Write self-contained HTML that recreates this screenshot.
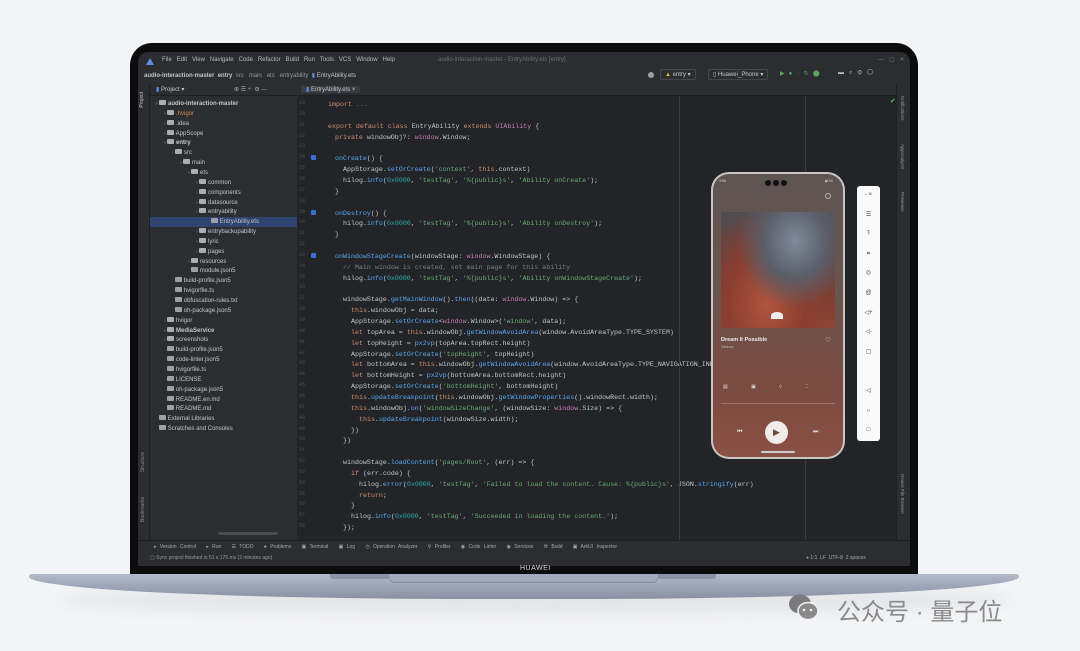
<!DOCTYPE html>
<html><head><meta charset="utf-8"><style>
*{margin:0;padding:0;box-sizing:border-box}
body{width:1080px;height:651px;background:#f3f4f6;position:relative;overflow:hidden;font-family:"Liberation Sans",sans-serif}
.a{position:absolute}
.bezel{left:130px;top:43px;width:788px;height:533px;background:#0c0c0d;border-radius:22px 22px 0 0}
.scr{left:138px;top:52px;width:772px;height:514px;background:#232427;overflow:hidden;border-radius:10px 10px 0 0}
.mono{font-family:"Liberation Mono",monospace;font-size:6.65px;white-space:pre;color:#c4c6cc}
.t{font-size:6px;color:#c4c6cc;white-space:nowrap}
.k{color:#cf8e6d}.f{color:#56a8f5}.s{color:#6aab73}.p{color:#c77dbb}.c{color:#7a7e85}.n{color:#2aacb8}
</style></head><body>
<div class="a" style="left:60px;top:585px;width:950px;height:30px;border-radius:50%;background:#e4e6ea;filter:blur(6px)"></div>
<div class="bezel a"></div>
<div class="scr a">
 <div class="a" style="left:0;top:0;width:772px;height:32px;background:#2b2d30"></div>
 <div class="a" style="left:8px;top:6px;width:8px;height:7px;background:#5b8ee6;clip-path:polygon(50% 0,100% 100%,0 100%)"></div>
 <div class="a t" style="left:24px;top:5px;color:#b8bac0">File&nbsp;&nbsp; Edit&nbsp;&nbsp; View&nbsp;&nbsp; Navigate&nbsp;&nbsp; Code&nbsp;&nbsp; Refactor&nbsp;&nbsp; Build&nbsp;&nbsp; Run&nbsp;&nbsp; Tools&nbsp;&nbsp; VCS&nbsp;&nbsp; Window&nbsp;&nbsp; Help</div>
 <div class="a t" style="left:300px;top:5px;color:#6c6e73">audio-interaction-master - EntryAbility.ets [entry]</div>
 <div class="a t" style="left:740px;top:4px;color:#777">—&nbsp;&nbsp;&nbsp;▢&nbsp;&nbsp;&nbsp;✕</div>
 <div class="a t" style="left:6px;top:20px;font-weight:bold">audio-interaction-master &nbsp;<b>entry</b> <span style="font-weight:normal;color:#999">&nbsp;src &nbsp; main &nbsp; ets &nbsp; entryability</span> <span style="font-weight:normal">&nbsp;<span style="color:#5b8ee6">▮</span> EntryAbility.ets</span></div>
 <div class="a" style="left:510px;top:20px;width:6px;height:6px;border-radius:50%;background:#9a9ca2"></div>
 <div class="a t" style="left:522px;top:17px;border:1px solid #44464b;padding:1px 4px;border-radius:2px"><span style="color:#e5b73b">▲</span> entry ▾</div>
 <div class="a t" style="left:570px;top:17px;border:1px solid #44464b;padding:1px 4px;border-radius:2px">▯ Huawei_Phone ▾</div>
 <div class="a t" style="left:642px;top:18px;color:#58a55c;letter-spacing:4px">▶●◌↻⬤</div>
 <div class="a t" style="left:700px;top:18px;color:#bbb;letter-spacing:5px">▬⌕⚙◯</div>
 <div class="a" style="left:12px;top:32px;width:147px;height:12px;background:#2b2d30;border-bottom:1px solid #1e1f22"></div>
 <div class="a t" style="left:18px;top:34px"><span style="color:#5b8ee6">▮</span> Project ▾ <span style="margin-left:48px;color:#aaa">⊕ ☰ ÷ &nbsp;⚙ —</span></div>
 <div class="a" style="left:159px;top:32px;width:613px;height:12px;background:#2b2d30;border-bottom:1px solid #1e1f22"></div>
 <div class="a t" style="left:163px;top:34px;background:#3a3c41;padding:0 5px"><span style="color:#5b8ee6">▮</span> EntryAbility.ets ×</div>
 <div class="a" style="left:0;top:32px;width:12px;height:470px;background:#2b2d30;border-right:1px solid #1e1f22"></div>
 <div class="a t" style="left:1px;top:40px;writing-mode:vertical-rl;transform:rotate(180deg);font-size:5px">Project</div>
 <div class="a t" style="left:2px;top:400px;writing-mode:vertical-rl;transform:rotate(180deg);font-size:5px;color:#888">Structure</div>
 <div class="a t" style="left:2px;top:445px;writing-mode:vertical-rl;transform:rotate(180deg);font-size:5px;color:#888">Bookmarks</div>
 <div class="a" style="left:12px;top:44px;width:147px;height:458px;background:#2b2d30"></div>
 <div class="a" style="left:12px;top:165px;width:147px;height:10px;background:#2e436e"></div>
 <div class="a" style="left:80px;top:480px;width:60px;height:3px;background:#4a4c50;border-radius:2px"></div>
 <div id="tree"></div>
 <div class="a" style="left:159px;top:44px;width:24px;height:458px;background:#232427"></div>
 <div id="code"></div>
 <div class="a" style="left:541px;top:44px;width:1px;height:458px;background:#393b40"></div>
 <div class="a" style="left:667px;top:44px;width:1px;height:458px;background:#393b40"></div>
 <div class="a" style="left:758px;top:32px;width:14px;height:470px;background:#2b2d30;border-left:1px solid #1e1f22"></div>
 <div class="a t" style="left:762px;top:44px;writing-mode:vertical-rl;font-size:4.5px;color:#999">Notifications</div>
 <div class="a t" style="left:762px;top:92px;writing-mode:vertical-rl;font-size:4.5px;color:#999">AppAnalyzer</div>
 <div class="a t" style="left:762px;top:140px;writing-mode:vertical-rl;font-size:4.5px;color:#999">Previewer</div>
 <div class="a t" style="left:762px;top:422px;writing-mode:vertical-rl;font-size:4.5px;color:#999">Device File Browser</div>
 <div class="a" style="left:752px;top:45px;color:#5fb85f;font-size:7px">✔</div>
 <div class="a" style="left:573px;top:120px;width:134px;height:287px;border-radius:18px;background:#c9c6c2;padding:2px">
  <div style="width:100%;height:100%;border-radius:16px;background:linear-gradient(180deg,#5d5552 0%,#6a5550 40%,#7a4a40 75%,#8a5046 100%);position:relative;overflow:hidden">
   <div class="a" style="left:52px;top:6px;width:26px;height:6px;display:flex;gap:2px"><i style="width:6px;height:6px;background:#111;border-radius:50%"></i><i style="width:6px;height:6px;background:#111;border-radius:50%"></i><i style="width:6px;height:6px;background:#111;border-radius:50%"></i></div>
   <div class="a" style="left:6px;top:5px;font-size:3.5px;color:#ddd">3:06</div>
   <div class="a" style="left:112px;top:5px;font-size:3.5px;color:#ddd">▮100</div>
   <div class="a" style="left:112px;top:19px;width:6px;height:6px;border:1px solid #bbb;border-radius:50%"></div>
   <div class="a" style="left:8px;top:38px;width:114px;height:116px;background:radial-gradient(ellipse at 65% 25%,#7d8a9a 0%,#5b5e68 30%,transparent 55%),radial-gradient(ellipse at 40% 80%,#b0553e 0%,#8a3e30 40%,transparent 75%),linear-gradient(180deg,#4f4c52,#7a3e33 70%,#8e4637)"></div>
   <div class="a" style="left:58px;top:138px;width:12px;height:7px;background:#eee;border-radius:50% 50% 0 0"></div>
   <div class="a" style="left:8px;top:163px;font-size:5.5px;color:#eee;font-weight:bold">Dream It Possible</div>
   <div class="a" style="left:8px;top:171px;font-size:3.5px;color:#bbb">Delacey</div>
   <div class="a" style="left:112px;top:162px;font-size:7px;color:#ddd">♡</div>
   <div class="a" style="left:10px;top:210px;font-size:5px;color:#ddd;word-spacing:22px">▤ ▣ ◊ ⁚⁚</div>
   <div class="a" style="left:8px;top:229px;width:114px;height:1px;background:#a07468"></div>
   <div class="a" style="left:24px;top:255px;font-size:6px;color:#eee">⏮</div>
   <div class="a" style="left:52px;top:247px;width:23px;height:23px;border-radius:50%;background:#f1ece9;color:#6a4a40;font-size:9px;text-align:center;line-height:23px">▶</div>
   <div class="a" style="left:100px;top:255px;font-size:6px;color:#eee">⏭</div>
   <div class="a" style="left:48px;top:277px;width:34px;height:1.5px;background:#ccc;border-radius:1px"></div>
  </div>
 </div>
 <div class="a" style="left:719px;top:134px;width:23px;height:255px;background:#fafafa;border-radius:3px">
  <div style="font-size:6px;color:#444;text-align:center;line-height:19.6px">
   - ×<br>☰<br>⤒<br>⌗<br>◎<br>@<br>◁+<br>◁-<br>▢<br>&nbsp;<br>◁<br>○<br>□
  </div>
 </div>
 <div class="a" style="left:0;top:488px;width:772px;height:26px;background:#2b2d30;border-top:1px solid #1e1f22"></div>
 <div class="a t" style="left:16px;top:492px;font-size:5px;color:#aaa;word-spacing:2px">▸ Version Control &nbsp; ▸ Run &nbsp; ☰ TODO &nbsp; ● Problems &nbsp; ▣ Terminal &nbsp; ▣ Log &nbsp; ◷ Operation Analyzer &nbsp; ⚲ Profiler &nbsp; ◉ Code Linter &nbsp; ◉ Services &nbsp; ⚒ Build &nbsp; ▣ ArkUI Inspector</div>
 <div class="a t" style="left:12px;top:503px;font-size:5px;color:#999">▢ Sync project finished in 51 s 176 ms (2 minutes ago)</div>
 <div class="a t" style="left:668px;top:503px;font-size:5px;color:#aaa"><span style="color:#5fb85f">●</span> 1:1 &nbsp;LF &nbsp;UTF-8 &nbsp;2 spaces</div>
</div>
<div class="a" style="left:520px;top:565px;font-size:7px;color:#ddd;letter-spacing:.5px">HUAWEI</div>
<div class="a" style="left:29px;top:574px;width:990px;height:25px;background:linear-gradient(180deg,#b3b9c8 0%,#9aa1b3 60%,#8a90a2 100%);border-radius:3px 3px 50% 50%/3px 3px 100% 100%"></div>
<div class="a" style="left:330px;top:574px;width:386px;height:5px;background:#8d93a4;border-radius:0 0 3px 3px"></div>
<div class="a" style="left:389px;top:574px;width:269px;height:9px;background:#a4aabb;border-radius:0 0 5px 5px;box-shadow:inset 0 -1px 1px #80869a"></div>
<svg class="a" style="left:788px;top:593px" width="32" height="30"><ellipse cx="12" cy="11" rx="11" ry="9.5" fill="#7a7a7a"/><ellipse cx="20" cy="18" rx="10" ry="8.5" fill="#8a8a8a" stroke="#f3f4f6" stroke-width="1.5"/><circle cx="16" cy="17" r="1.3" fill="#f3f4f6"/><circle cx="23" cy="17" r="1.3" fill="#f3f4f6"/></svg>
<div class="a" style="left:837px;top:592px;font-family:'Liberation Sans','Noto Sans CJK SC',sans-serif;font-size:24px;color:#8a8a8a;letter-spacing:0">公众号 · 量子位</div>
<script>
var tree=[
[0,"audio-interaction-master",1,"#c4c6cc",1],[1,".hvigor",1,"#d08a50"],[1,".idea",1],[1,"AppScope",1],[1,"entry",1,null,1],[2,"src",1],[3,"main",1],[4,"ets",1],[5,"common",1],[5,"components",1],[5,"datasource",1],[5,"entryability",1],[6.5,"EntryAbility.ets",0],[5,"entrybackupability",1],[5,"lyric",1],[5,"pages",1],[4,"resources",1],[4,"module.json5",0],[2,"build-profile.json5",0],[2,"hvigorfile.ts",0],[2,"obfuscation-rules.txt",0],[2,"oh-package.json5",0],[1,"hvigor",1],[1,"MediaService",1,null,1],[1,"screenshots",1],[1,"build-profile.json5",0],[1,"code-linter.json5",0],[1,"hvigorfile.ts",0],[1,"LICENSE",0],[1,"oh-package.json5",0],[1,"README.en.md",0],[1,"README.md",0],[0,"External Libraries",0],[0,"Scratches and Consoles",0]];
var h="";tree.forEach(function(e,i){var y=48+i*9.85,x=18+e[0]*8;
h+='<div class="a t" style="left:'+x+'px;top:'+y+'px;'+(e[4]?'font-weight:bold;':'')+(e[3]?'color:'+e[3]+';':'')+'"><span style="color:#888;font-size:5px">'+(e[2]?'›':'&nbsp;')+'</span> <span style="display:inline-block;width:7px;height:5px;background:'+(e[2]?'#a9adb5':'#9ca0a8')+';border-radius:1px"></span> '+e[1]+'</div>'});
document.getElementById('tree').outerHTML=h;
var L=[
[0,'<span class="k">import</span> <span class="c">...</span>'],[0,''],
[0,'<span class="k">export default class</span> EntryAbility <span class="k">extends</span> <span class="p">UIAbility</span> {'],
[1,'<span class="k">private</span> windowObj?: <span class="p">window</span>.Window;'],[0,''],
[1,'<span class="f">onCreate</span>() {'],
[2,'AppStorage.<span class="f">setOrCreate</span>(<span class="s">\'context\'</span>, <span class="k">this</span>.context)'],
[2,'hilog.<span class="f">info</span>(<span class="n">0x0000</span>, <span class="s">\'testTag\'</span>, <span class="s">\'%{public}s\'</span>, <span class="s">\'Ability onCreate\'</span>);'],
[1,'}'],[0,''],
[1,'<span class="f">onDestroy</span>() {'],
[2,'hilog.<span class="f">info</span>(<span class="n">0x0000</span>, <span class="s">\'testTag\'</span>, <span class="s">\'%{public}s\'</span>, <span class="s">\'Ability onDestroy\'</span>);'],
[1,'}'],[0,''],
[1,'<span class="f">onWindowStageCreate</span>(windowStage: <span class="p">window</span>.WindowStage) {'],
[2,'<span class="c">// Main window is created, set main page for this ability</span>'],
[2,'hilog.<span class="f">info</span>(<span class="n">0x0000</span>, <span class="s">\'testTag\'</span>, <span class="s">\'%{public}s\'</span>, <span class="s">\'Ability onWindowStageCreate\'</span>);'],[0,''],
[2,'windowStage.<span class="f">getMainWindow</span>().<span class="f">then</span>((data: <span class="p">window</span>.Window) => {'],
[3,'<span class="k">this</span>.windowObj = data;'],
[3,'AppStorage.<span class="f">setOrCreate</span>&lt;<span class="p">window</span>.Window&gt;(<span class="s">\'window\'</span>, data);'],
[3,'<span class="k">let</span> topArea = <span class="k">this</span>.windowObj.<span class="f">getWindowAvoidArea</span>(window.AvoidAreaType.TYPE_SYSTEM)'],
[3,'<span class="k">let</span> topHeight = <span class="f">px2vp</span>(topArea.topRect.height)'],
[3,'AppStorage.<span class="f">setOrCreate</span>(<span class="s">\'topHeight\'</span>, topHeight)'],
[3,'<span class="k">let</span> bottomArea = <span class="k">this</span>.windowObj.<span class="f">getWindowAvoidArea</span>(window.AvoidAreaType.TYPE_NAVIGATION_INDICATOR)'],
[3,'<span class="k">let</span> bottomHeight = <span class="f">px2vp</span>(bottomArea.bottomRect.height)'],
[3,'AppStorage.<span class="f">setOrCreate</span>(<span class="s">\'bottomHeight\'</span>, bottomHeight)'],
[3,'<span class="k">this</span>.<span class="f">updateBreakpoint</span>(<span class="k">this</span>.windowObj.<span class="f">getWindowProperties</span>().windowRect.width);'],
[3,'<span class="k">this</span>.windowObj.<span class="f">on</span>(<span class="s">\'windowSizeChange\'</span>, (windowSize: <span class="p">window</span>.Size) => {'],
[4,'<span class="k">this</span>.<span class="f">updateBreakpoint</span>(windowSize.width);'],
[3,'})'],[2,'})'],[0,''],
[2,'windowStage.<span class="f">loadContent</span>(<span class="s">\'pages/Root\'</span>, (err) => {'],
[3,'<span class="k">if</span> (err.code) {'],
[4,'hilog.<span class="f">error</span>(<span class="n">0x0000</span>, <span class="s">\'testTag\'</span>, <span class="s">\'Failed to load the content. Cause: %{public}s\'</span>, JSON.<span class="f">stringify</span>(err) ?? <span class="s">\'\'</span>);'],
[4,'<span class="k">return</span>;'],[3,'}'],
[3,'hilog.<span class="f">info</span>(<span class="n">0x0000</span>, <span class="s">\'testTag\'</span>, <span class="s">\'Succeeded in loading the content.\'</span>);'],
[2,'});']];
var c="";L.forEach(function(e,i){var y=48+i*10.85;
c+='<div class="a mono" style="left:161px;top:'+y+'px;color:#4b4d52;font-size:5px">'+(19+i)+'</div>';
var x=190+e[0]*8-(e[0]>=1?1:0);
c+='<div class="a mono" style="left:'+x+'px;top:'+y+'px;max-width:'+(620-x)+'px;overflow:hidden">'+e[1]+'</div>'});
[5,10,14].forEach(function(i){c+='<div class="a" style="left:173px;top:'+(49+i*10.85)+'px;width:5px;height:5px;background:#3d6fd6;border-radius:1px"></div>'});
document.getElementById('code').outerHTML=c;
</script>
</body></html>
